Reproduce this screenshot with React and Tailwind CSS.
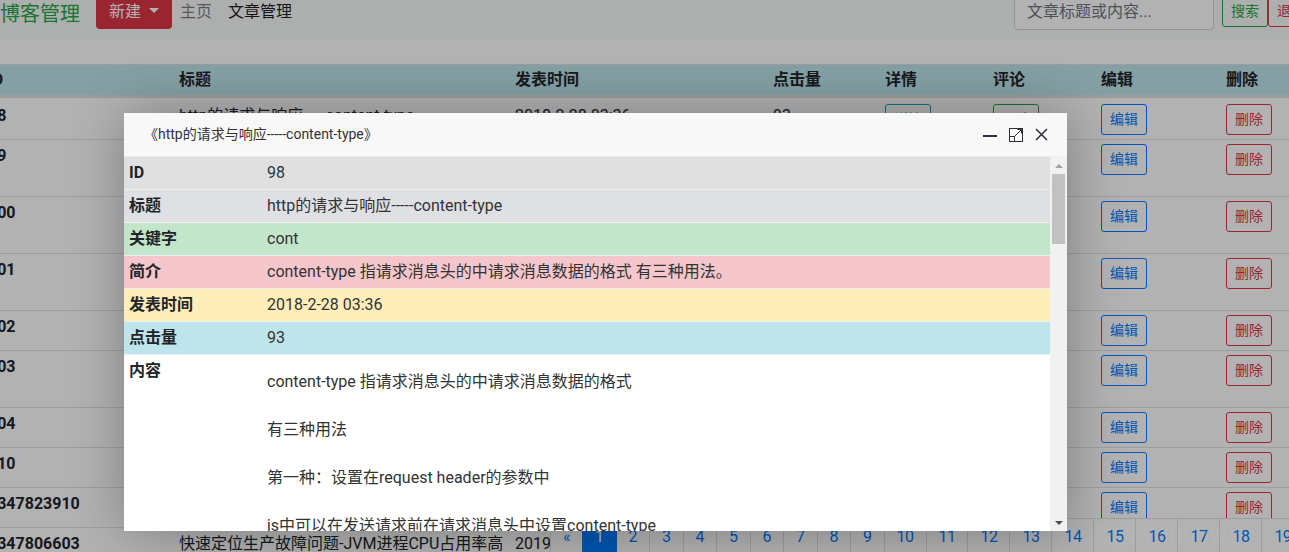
import React from 'react';

const cols = 'grid grid-cols-[191px_336px_258px_112px_108px_108px_125px_100px]';

const articles = [
  { id: '98', title: 'http的请求与响应-----content-type', date: '2018-2-28 03:36', hits: 93 },
  { id: '99', title: 'Spring Boot中使用拦截器实现登录验证与权限控制的完整示例', date: '2018-3-02 10:12', hits: 41 },
  { id: '100', title: 'MySQL索引原理与优化：B+树结构以及最左前缀匹配原则详解', date: '2018-3-05 21:40', hits: 67 },
  { id: '101', title: 'Java并发编程之线程池ThreadPoolExecutor参数配置与源码分析', date: '2018-3-09 16:25', hits: 58 },
  { id: '102', title: 'Redis缓存穿透与雪崩解决方案', date: '2018-3-12 09:03', hits: 35 },
  { id: '103', title: 'Linux常用命令总结：文件操作、进程管理与网络排查技巧大全', date: '2018-3-18 14:51', hits: 29 },
  { id: '104', title: 'Git分支管理规范与常用操作', date: '2018-3-21 11:37', hits: 22 },
  { id: '110', title: 'Nginx反向代理与负载均衡配置', date: '2018-4-02 19:08', hits: 18 },
  { id: '1347823910', title: 'JVM垃圾回收器对比与选择', date: '2019-1-10 15:20', hits: 12 },
  { id: '1347806603', title: '快速定位生产故障问题-JVM进程CPU占用率高', date: '2019-1-10 14:46', hits: 9, nowrap: true },
];

const pages = Array.from({ length: 20 }, (_, i) => i + 1);

const details = [
  { label: 'ID', value: '98', bg: 'bg-[#e0e0e0]' },
  { label: '标题', value: 'http的请求与响应-----content-type', bg: 'bg-[#dfe0e4]' },
  { label: '关键字', value: 'cont', bg: 'bg-[#c3e6cb]' },
  { label: '简介', value: 'content-type 指请求消息头的中请求消息数据的格式 有三种用法。', bg: 'bg-[#f5c6cb]' },
  { label: '发表时间', value: '2018-2-28 03:36', bg: 'bg-[#ffeeba]' },
  { label: '点击量', value: '93', bg: 'bg-[#bee5eb]' },
];

const paragraphs = [
  'content-type 指请求消息头的中请求消息数据的格式',
  '有三种用法',
  '第一种：设置在request header的参数中',
  'js中可以在发送请求前在请求消息头中设置content-type',
  'xhr.setRequestHeader("Content-Type", "application/json");',
  '第二种：设置在form表单的enctype属性中',
];

const SmallBtn = ({ children, tone }) => (
  <span className={`inline-flex h-[31px] items-center rounded-[3px] border px-2 text-[14px] leading-[21px] ${tone}`}>
    {children}
  </span>
);

const ArticleLayer = () => (
  <div className="absolute left-[124px] top-[113px] flex h-[418px] w-[943px] flex-col bg-white shadow-[1px_1px_50px_rgba(0,0,0,0.3)]">
    <div className="flex h-[44px] shrink-0 items-center border-b border-[#eeeeee] bg-[#f8f8f8] pl-5 pr-[19px]">
      <span className="flex-1 text-[14px] text-[#333]">《http的请求与响应-----content-type》</span>
      <div className="flex items-center gap-3 text-[#2e2d3c]">
        <svg width="14" height="14" viewBox="0 0 14 14">
          <rect x="0" y="7" width="14" height="2" fill="currentColor" />
        </svg>
        <svg width="14" height="14" viewBox="0 0 14 14" fill="none" stroke="currentColor" strokeWidth="1">
          <rect x="0.5" y="0.5" width="13" height="13" />
          <rect x="0.5" y="8.5" width="5" height="5" />
          <path d="M6 8 L12.5 1.5 M8.5 1.5 H12.5 V5.5" />
        </svg>
        <svg width="13" height="13" viewBox="0 0 13 13" stroke="currentColor" strokeWidth="1.5">
          <path d="M1 1 L12 12 M12 1 L1 12" />
        </svg>
      </div>
    </div>
    <div className="flex min-h-0 flex-1">
      <div className="flex-1 overflow-hidden text-[16px] leading-6 text-[#212529]">
        {details.map((d, i) => (
          <div key={d.label} className={`flex py-1 ${d.bg} ${i ? 'border-t border-[#eef0f2]' : ''}`}>
            <div className="w-[138px] shrink-0 pl-[5px] font-bold">{d.label}</div>
            <div className="flex-1 pl-[5px] text-[#333]">{d.value}</div>
          </div>
        ))}
        <div className="flex border-t border-[#eef0f2] py-1">
          <div className="w-[138px] shrink-0 pl-[5px] font-bold">内容</div>
          <div className="mt-[11px] flex flex-1 flex-col gap-6 pl-[5px] text-[#333]">
            {paragraphs.map((p) => (
              <p key={p}>{p}</p>
            ))}
          </div>
        </div>
      </div>
      <div className="flex w-[17px] shrink-0 flex-col items-center bg-[#f1f1f1]">
        <div className="flex h-[17px] items-center justify-center">
          <span className="border-x-[4px] border-b-[4px] border-x-transparent border-b-[#a3a3a3]" />
        </div>
        <div className="h-[70px] w-[13px] bg-[#c1c1c1]" />
        <div className="flex-1" />
        <div className="flex h-[17px] items-center justify-center">
          <span className="border-x-[4px] border-t-[4px] border-x-transparent border-t-[#505050]" />
        </div>
      </div>
    </div>
  </div>
);

export default function App() {
  return (
    <div className="relative h-[552px] w-[1289px] overflow-hidden bg-white font-['Roboto','Noto_Sans_CJK_SC',sans-serif] text-[#212529]">
      <div className="h-10 overflow-hidden bg-[#f8f9fa]">
        <div className="-mt-[9px] flex w-[1330px] items-start">
          <span className="mr-4 mt-[8px] text-[20px] leading-[30px] text-[#28a745]">博客管理</span>
          <span className="flex h-[38px] items-center rounded-[4px] bg-[#dc3545] px-[13px] pt-[3px] text-[16px] text-white">
            新建
            <span className="mb-[3px] ml-2 border-x-[5px] border-t-[5px] border-x-transparent border-t-white" />
          </span>
          <span className="mt-[9px] px-2 leading-6 text-black/50">主页</span>
          <span className="mt-[9px] px-2 leading-6 text-black/90">文章管理</span>
          <div className="ml-auto mr-4 flex items-start">
            <div className="mt-[1px] flex h-[38px] w-[200px] items-center rounded-[4px] border border-[#ced4da] bg-white px-3 pt-[2px] text-[16px] text-[#6c757d]">
              文章标题或内容...
            </div>
            <span className="ml-2 mt-[5px]">
              <SmallBtn tone="border-[#28a745] text-[#28a745]">搜索</SmallBtn>
            </span>
            <span className="mt-[5px]">
              <SmallBtn tone="border-[#dc3545] text-[#dc3545]">退出</SmallBtn>
            </span>
          </div>
        </div>
      </div>

      <div className="-ml-6 mt-6 w-[1338px] text-[16px] leading-6">
        <div className={`${cols} border-b-2 border-t border-[#dee2e6] bg-[#bee5eb] font-bold`}>
          {['ID', '标题', '发表时间', '点击量', '详情', '评论', '编辑', '删除'].map((h) => (
            <div key={h} className="px-3 py-[3px]">{h}</div>
          ))}
        </div>
        {articles.map((a, i) => (
          <div key={a.id} className={`${cols} items-start border-t border-[#dee2e6] ${i === 0 ? 'pb-1 pt-[6px]' : 'py-1'}`}>
            <div className="px-3 font-bold">{a.id}</div>
            <div className={`px-3 ${a.nowrap ? 'whitespace-nowrap' : ''}`}>{a.title}</div>
            <div className="px-3">{a.date}</div>
            <div className="px-3">{a.hits}</div>
            <div className="px-3"><SmallBtn tone="border-[#17a2b8] text-[#17a2b8]">详情</SmallBtn></div>
            <div className="px-3"><SmallBtn tone="border-[#28a745] text-[#28a745]">评论</SmallBtn></div>
            <div className="px-3"><SmallBtn tone="border-[#007bff] text-[#007bff]">编辑</SmallBtn></div>
            <div className="px-3"><SmallBtn tone="border-[#dc3545] text-[#dc3545]">删除</SmallBtn></div>
          </div>
        ))}
      </div>

      <div className="absolute left-[550px] top-[518px] flex text-[16px] leading-5 tracking-[-0.5px]">
        <span className="rounded-l-[4px] border border-[#dee2e6] bg-white px-3 py-2 text-[#007bff]">«</span>
        {pages.map((p) => (
          <span
            key={p}
            className={`-ml-px border px-3 py-2 ${
              p === 1 ? 'relative border-[#007bff] bg-[#007bff] text-white' : 'border-[#dee2e6] bg-white text-[#007bff]'
            }`}
          >
            {p}
          </span>
        ))}
      </div>

      <div className="absolute inset-0 bg-black/30" />

      <ArticleLayer />

      <div className="pointer-events-none absolute left-[1088px] top-[520px] text-[24px] leading-[30px] text-white/[0.06]">
        激活 Windows
      </div>
    </div>
  );
}
